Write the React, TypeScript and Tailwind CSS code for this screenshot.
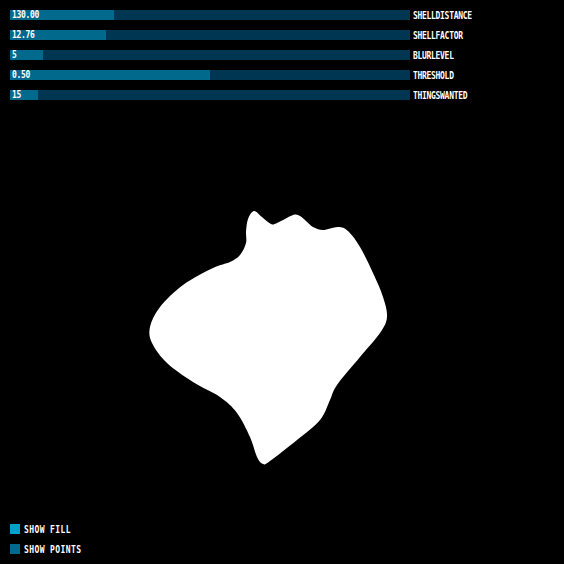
import React from 'react';

interface SliderProps {
  label: string;
  value: string;
  fill: number; // filled width in px, out of 400
}

const sliders: SliderProps[] = [
  { label: 'SHELLDISTANCE', value: '130.00', fill: 104 },
  { label: 'SHELLFACTOR', value: '12.76', fill: 96 },
  { label: 'BLURLEVEL', value: '5', fill: 33 },
  { label: 'THRESHOLD', value: '0.50', fill: 200 },
  { label: 'THINGSWANTED', value: '15', fill: 28 },
];

// outline of the blob, traced from the sketch
const blob: [number, number][] = [
  [254, 211], [248, 219], [246, 232], [246, 243], [240, 255], [230, 262], [213, 268],
  [183, 285], [160, 307], [150, 327], [152, 343], [167, 363], [193, 382], [220, 397],
  [237, 413], [250, 437], [257, 457], [263, 464], [270, 461], [297, 440], [320, 420],
  [330, 400], [337, 385], [360, 357], [380, 333], [387, 317], [383, 297], [373, 273],
  [360, 247], [348, 231], [338, 227], [323, 230], [313, 227], [306, 221], [300, 216],
  [293, 215], [277, 223], [271, 224], [262, 217],
];

function smoothPath(pts: [number, number][]) {
  const n = pts.length;
  let d = `M${pts[0][0]},${pts[0][1]}`;
  for (let i = 0; i < n; i++) {
    const p0 = pts[(i - 1 + n) % n];
    const p1 = pts[i];
    const p2 = pts[(i + 1) % n];
    const p3 = pts[(i + 2) % n];
    const c1x = p1[0] + (p2[0] - p0[0]) / 6;
    const c1y = p1[1] + (p2[1] - p0[1]) / 6;
    const c2x = p2[0] - (p3[0] - p1[0]) / 6;
    const c2y = p2[1] - (p3[1] - p1[1]) / 6;
    d += ` C${c1x.toFixed(1)},${c1y.toFixed(1)} ${c2x.toFixed(1)},${c2y.toFixed(1)} ${p2[0]},${p2[1]}`;
  }
  return d + 'Z';
}

// controlP5-ish pixel text: narrow and a bit tall
const pixelText = 'inline-block origin-left text-[8px] leading-[10px] font-bold text-white tracking-[-0.3px] scale-y-[1.2]';

function Slider({ label, value, fill }: SliderProps) {
  return (
    <div className="flex items-center h-[10px]">
      <div className="relative w-[400px] h-[10px] bg-[#003652]">
        <div className="h-full bg-[#00698c]" style={{ width: fill }} />
        <span className={`absolute left-[2px] top-[1px] ${pixelText}`}>{value}</span>
      </div>
      <span className={`ml-[3px] pt-[2px] ${pixelText}`}>{label}</span>
    </div>
  );
}

function Toggle({ label, on }: { label: string; on: boolean }) {
  return (
    <div className="flex items-center h-[10px] gap-[4px]">
      <div className={on ? 'w-[10px] h-[10px] bg-[#00a0cc]' : 'w-[10px] h-[10px] bg-[#00698c]'} />
      <span className="inline-block pt-[1px] text-[8px] leading-[10px] font-bold text-white tracking-[0.4px] scale-y-[1.2]">{label}</span>
    </div>
  );
}

export default function App() {
  return (
    <div
      className="relative w-[564px] h-[564px] bg-black overflow-hidden"
      style={{ fontFamily: '"DejaVu Sans Mono", "Liberation Mono", monospace' }}
    >
      <svg className="absolute inset-0" width="564" height="564" viewBox="0 0 564 564">
        <path d={smoothPath(blob)} fill="#ffffff" />
      </svg>

      <div className="relative flex flex-col justify-between h-full px-[10px] pt-[10px] pb-[10px]">
        <div className="flex flex-col gap-[10px]">
          {sliders.map((s) => (
            <Slider key={s.label} {...s} />
          ))}
        </div>
        <div className="flex flex-col gap-[10px]">
          <Toggle label="SHOW FILL" on />
          <Toggle label="SHOW POINTS" on={false} />
        </div>
      </div>
    </div>
  );
}
